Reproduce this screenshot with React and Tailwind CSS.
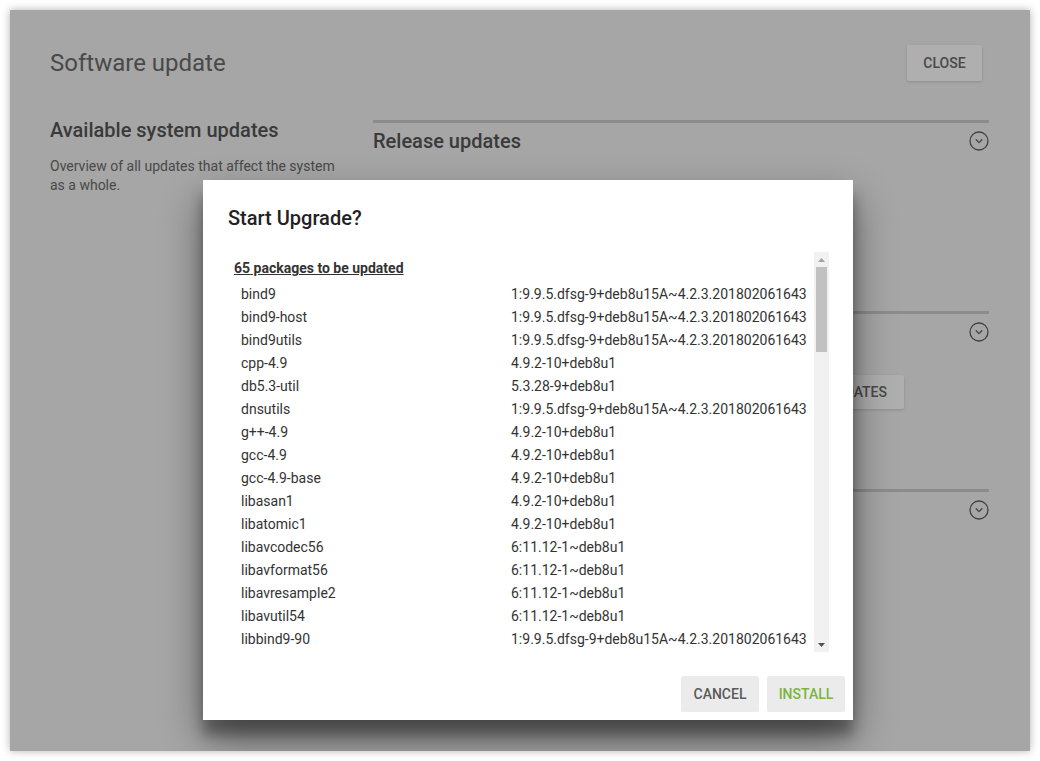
import React from "react";

const BIND = "1:9.9.5.dfsg-9+deb8u15A~4.2.3.201802061643";
const GCC = "4.9.2-10+deb8u1";
const AV = "6:11.12-1~deb8u1";
const SD = "215-17+deb8u7";
const PERL = "5.20.2-3+deb8u9";
const PG = "9.4.15-0+deb8u1";
const SSL = "1.0.1t-1+deb8u7";

const packages = [
  ["bind9", BIND],
  ["bind9-host", BIND],
  ["bind9utils", BIND],
  ["cpp-4.9", GCC],
  ["db5.3-util", "5.3.28-9+deb8u1"],
  ["dnsutils", BIND],
  ["g++-4.9", GCC],
  ["gcc-4.9", GCC],
  ["gcc-4.9-base", GCC],
  ["libasan1", GCC],
  ["libatomic1", GCC],
  ["libavcodec56", AV],
  ["libavformat56", AV],
  ["libavresample2", AV],
  ["libavutil54", AV],
  ["libbind9-90", BIND],
  ["libcilkrts5", GCC],
  ["libdb5.3", "5.3.28-9+deb8u1"],
  ["libdns-export100", BIND],
  ["libdns100", BIND],
  ["libgcc-4.9-dev", GCC],
  ["libgcc1", "1:" + GCC],
  ["libgomp1", GCC],
  ["libirs-export91", BIND],
  ["libisc-export95", BIND],
  ["libisc95", BIND],
  ["libisccc90", BIND],
  ["libisccfg-export90", BIND],
  ["libisccfg90", BIND],
  ["libitm1", GCC],
  ["liblsan0", GCC],
  ["liblwres90", BIND],
  ["libperl5.20", PERL],
  ["libpq5", PG],
  ["libquadmath0", GCC],
  ["libsqlite3-0", "3.8.7.1-1+deb8u3"],
  ["libssl1.0.0", SSL],
  ["libstdc++-4.9-dev", GCC],
  ["libstdc++6", GCC],
  ["libswresample1", AV],
  ["libswscale3", AV],
  ["libsystemd0", SD],
  ["libtiff5", "4.0.3-12.3+deb8u5"],
  ["libtsan0", GCC],
  ["libubsan0", GCC],
  ["libudev1", SD],
  ["libwebp5", "0.4.1-1.2+deb8u1"],
  ["libwebpdemux1", "0.4.1-1.2+deb8u1"],
  ["libwebpmux1", "0.4.1-1.2+deb8u1"],
  ["libxml2", "2.9.1+dfsg1-5+deb8u6"],
  ["openssl", SSL],
  ["perl", PERL],
  ["perl-base", PERL],
  ["perl-modules", PERL],
  ["postgresql-9.4", PG],
  ["postgresql-client-9.4", PG],
  ["procps", "2:3.3.9-9+deb8u1"],
  ["python3.4", "3.4.2-1+deb8u1"],
  ["python3.4-minimal", "3.4.2-1+deb8u1"],
  ["systemd", SD],
  ["systemd-sysv", SD],
  ["tzdata", "2018c-0+deb8u1"],
  ["udev", SD],
  ["unzip", "6.0-16+deb8u3"],
  ["wget", "1.16-1+deb8u4"],
];

function ChevronCircle() {
  return (
    <svg width="20" height="20" viewBox="0 0 20 20" fill="none" stroke="#5f5f5f" strokeWidth="1.3" strokeLinecap="round" strokeLinejoin="round">
      <circle cx="10" cy="10" r="9" />
      <path d="M7.2 8.8 10 11.6 12.8 8.8" />
    </svg>
  );
}

function SectionHeader({ title }) {
  return (
    <div className="flex h-[36px] items-center justify-between">
      <h3 className="text-[20px] font-medium text-[#555]">{title}</h3>
      <ChevronCircle />
    </div>
  );
}

// classic scrollbar look, drawn in flow beside the list
function Scrollbar() {
  return (
    <div className="flex w-[15px] shrink-0 flex-col bg-[#f1f1f1]">
      <div className="flex h-[15px] items-center justify-center">
        <svg width="7" height="4" viewBox="0 0 7 4">
          <path d="M0 4 3.5 0 7 4Z" fill="#a3a3a3" />
        </svg>
      </div>
      <div className="flex-1">
        <div className="mx-[2px] h-[85px] bg-[#c1c1c1]" />
      </div>
      <div className="flex h-[15px] items-center justify-center">
        <svg width="7" height="4" viewBox="0 0 7 4">
          <path d="M0 0 3.5 4 7 0Z" fill="#505050" />
        </svg>
      </div>
    </div>
  );
}

export default function App() {
  return (
    <div className="min-h-screen bg-white p-[10px] font-['Roboto',sans-serif]">
      <div className="relative h-[741px] overflow-hidden bg-[#f2f2f2] shadow-[0_0_8px_rgba(0,0,0,0.3)]">
        {/* page header */}
        <div className="flex items-center justify-between pl-[40px] pr-[48px] pt-[35px]">
          <h1 className="text-[24px] leading-[36px] text-[#6b6b6b]">Software update</h1>
          <button
            type="button"
            className="h-[36px] w-[75px] rounded-[2px] bg-white pt-[1px] text-[14px] font-medium text-[#6b6b6b] shadow-[0_1px_3px_rgba(0,0,0,0.15)]"
          >
            CLOSE
          </button>
        </div>

        {/* body */}
        <div className="mt-[39px] flex pl-[40px] pr-[41px]">
          <div className="w-[323px] shrink-0 pr-[30px]">
            <h2 className="text-[20px] font-medium leading-[20px] text-[#555]">Available system updates</h2>
            <p className="mt-[17px] text-[14px] leading-[19px] text-[#6b6b6b]">
              Overview of all updates that affect the system as a whole.
            </p>
          </div>

          <div className="flex-1">
            <section className="h-[191px] border-t-[3px] border-[#cccccc]">
              <SectionHeader title="Release updates" />
            </section>
            <section className="h-[178px] border-t-[3px] border-[#cccccc]">
              <SectionHeader />
              <div className="mt-[25px] flex justify-end pr-[85px]">
                <button
                  type="button"
                  className="h-[34px] rounded-[2px] bg-white px-[17px] text-[14px] font-medium text-[#6b6b6b] shadow-[0_1px_3px_rgba(0,0,0,0.15)]"
                >
                  INSTALL UPDATES
                </button>
              </div>
            </section>
            <section className="border-t-[3px] border-[#cccccc]">
              <SectionHeader />
            </section>
          </div>
        </div>

        {/* dim overlay */}
        <div className="absolute inset-0 bg-black/[0.314]" />

        {/* dialog */}
        <div className="absolute left-[193px] top-[170px] flex h-[540px] w-[650px] flex-col bg-white shadow-[0_19px_38px_rgba(0,0,0,0.45),0_15px_12px_rgba(0,0,0,0.3)]">
          <h2 className="px-[25px] pt-[24px] text-[20px] font-medium leading-[28px] text-[#222]">Start Upgrade?</h2>

          <div className="ml-[25px] mr-[24px] mt-[20px] flex h-[400px]">
            <div className="flex-1 overflow-hidden text-[14px] text-[#333]">
              <div className="pl-[6px] pt-[5px] font-bold leading-[23px] underline">
                {packages.length} packages to be updated
              </div>
              <div className="mt-[3px]">
                {packages.map(([name, version]) => (
                  <div key={name} className="flex pl-[13px] leading-[23px]">
                    <span className="w-[270px] shrink-0">{name}</span>
                    <span>{version}</span>
                  </div>
                ))}
              </div>
            </div>
            <Scrollbar />
          </div>

          <div className="mt-[24px] flex justify-end gap-[8px] pr-[8px]">
            <button type="button" className="h-[36px] w-[78px] rounded-[2px] bg-[#ebebeb] text-[14px] font-medium text-[#5a5a5a]">
              CANCEL
            </button>
            <button type="button" className="h-[36px] w-[78px] rounded-[2px] bg-[#ebebeb] text-[14px] font-medium text-[#7cb342]">
              INSTALL
            </button>
          </div>
        </div>
      </div>
    </div>
  );
}
